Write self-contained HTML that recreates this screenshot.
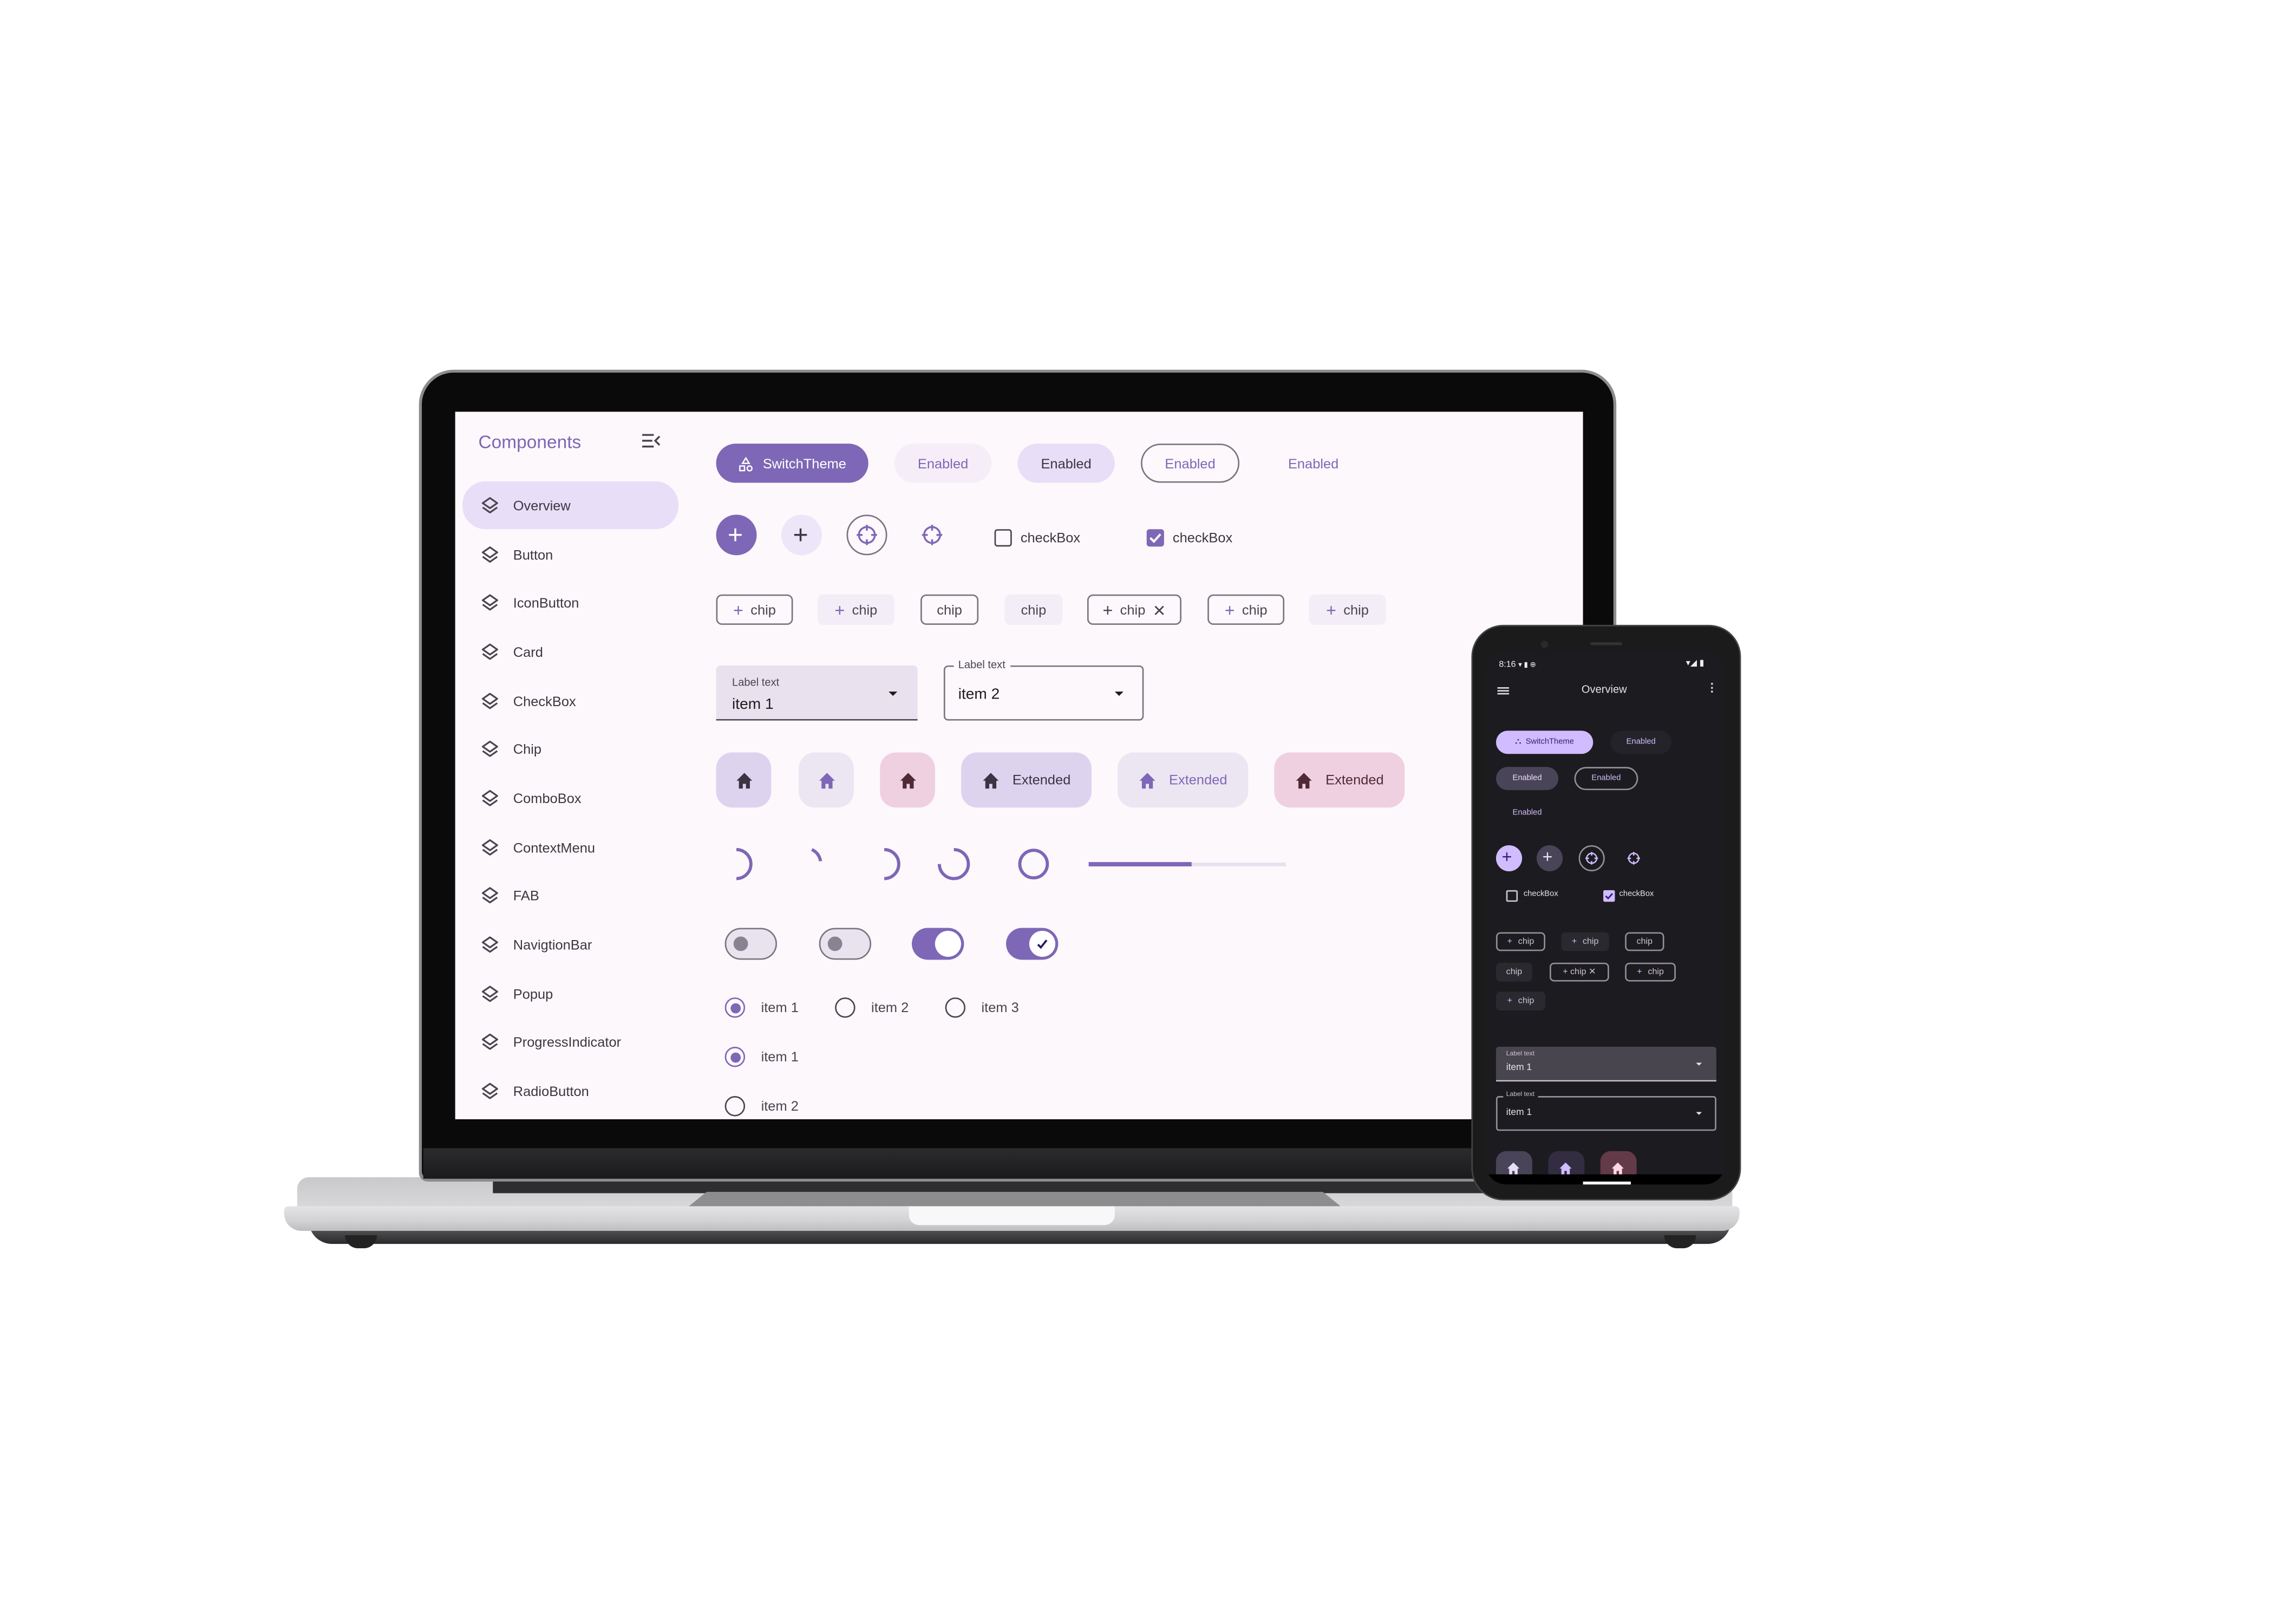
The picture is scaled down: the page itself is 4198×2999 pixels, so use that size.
<!DOCTYPE html>
<html><head><meta charset="utf-8">
<style>
*{margin:0;padding:0;box-sizing:border-box}
html,body{width:4198px;height:2998px;background:#fff;overflow:hidden}
#s{position:absolute;left:0;top:0;width:1568px;height:1120px;transform:scale(2.67730);transform-origin:0 0;font-family:"Liberation Sans",sans-serif}
.a{position:absolute}
.t{position:absolute;white-space:nowrap;line-height:1}
.nav{position:absolute;left:354px;font-size:9.5px;color:#3a3740}
.ni{position:absolute;left:331px}
.btn{position:absolute;height:27px;border-radius:14px;font-size:9.5px;display:flex;align-items:center;justify-content:center}
.chip{position:absolute;top:410px;height:21px;border-radius:4px;font-size:9.5px;color:#49454f;display:flex;align-items:center;justify-content:center;gap:5px}
.co{border:1px solid #79747e}
.cf{background:#f3edf7}
.fab{position:absolute;top:519px;height:38px;border-radius:11px;display:flex;align-items:center;justify-content:center;gap:8px;font-size:9.5px}
.pc{position:absolute;left:1032px;height:16px;border-radius:8px;font-size:5.5px;display:flex;align-items:center;justify-content:center;gap:3px}
.pch{position:absolute;height:13px;border-radius:3px;font-size:6px;color:#cac4d0;display:flex;align-items:center;justify-content:center;gap:4px}
.pco{border:.7px solid #938f99}
.pcf{background:#2b2930}
</style></head><body>
<div id="s">
<div class="a" style="left:213px;top:842px;width:981px;height:16px;border-radius:0 0 30px 30px;background:linear-gradient(#6a6a6c,#2a2a2c)"></div>
<div class="a" style="left:238px;top:852px;width:22px;height:9px;border-radius:0 0 10px 10px;background:#222"></div>
<div class="a" style="left:1148px;top:852px;width:22px;height:9px;border-radius:0 0 10px 10px;background:#222"></div>
<div class="a" style="left:205px;top:812px;width:990px;height:22px;border-radius:8px 8px 0 0;background:linear-gradient(#c9c9cc,#d9d9dc)"></div>
<div class="a" style="left:340px;top:813px;width:690px;height:10px;background:#2e2e30"></div>
<div class="a" style="left:474px;top:822px;width:452px;height:11px;background:#8d8d90;clip-path:polygon(3% 0,97% 0,100% 100%,0 100%)"></div>
<div class="a" style="left:196px;top:832px;width:1004px;height:17px;border-radius:3px 3px 12px 12px;background:linear-gradient(#e4e4e6,#d2d2d5 60%,#bdbdc0)"></div>
<div class="a" style="left:627px;top:832px;width:142px;height:13px;border-radius:0 0 7px 7px;background:#f8f8f8"></div>
<div class="a" style="left:289px;top:255px;width:826px;height:560px;border-radius:24px 24px 6px 6px;background:#8c8c8e"></div>
<div class="a" style="left:291px;top:257px;width:822px;height:556px;border-radius:22px 22px 5px 5px;background:#0a0a0b"></div>
<div class="a" style="left:292px;top:792px;width:820px;height:21px;background:linear-gradient(#2c2c2e,#1a1a1c)"></div>
<div class="a" style="left:314px;top:284px;width:778px;height:488px;background:#fdf8fc;overflow:hidden"></div>

<div class="t" style="left:330px;top:299px;font-size:12.5px;color:#7d67b4">Components</div>
<svg class="a" style="left:442px;top:298px" width="14" height="12" viewBox="0 0 14 12"><path d="M1 2H9M1 6H8M1 10H9M13 3L10 6L13 9" stroke="#49454f" stroke-width="1.3" fill="none"/></svg>
<div class="a" style="left:319px;top:332px;width:149px;height:33px;border-radius:16px;background:#e8def8"></div>
<div id="nav"></div>

<div class="btn" style="left:494px;top:306px;width:105px;background:#7e67b6;color:#fff;gap:6px;padding-top:2px"><svg width="11" height="11" viewBox="0 0 12 12"><path d="M6 1L8.5 5H3.5Z M1.5 7H5V10.5H1.5Z" fill="none" stroke="#fff" stroke-width="1"/><circle cx="8.8" cy="8.8" r="1.8" fill="none" stroke="#fff" stroke-width="1"/></svg>SwitchTheme</div>
<div class="btn" style="left:617px;top:306px;width:67px;background:#f5eef8;color:#7e67b6;padding-top:2px">Enabled</div>
<div class="btn" style="left:702px;top:306px;width:67px;background:#e8def8;color:#3a3740;padding-top:2px">Enabled</div>
<div class="btn" style="left:787px;top:306px;width:68px;border:1px solid #79747e;color:#7e67b6;padding-top:2px">Enabled</div>
<div class="btn" style="left:872px;top:306px;width:68px;color:#7e67b6;padding-top:2px">Enabled</div>

<div class="a" style="left:494px;top:355px;width:28px;height:28px;border-radius:50%;background:#7e67b6"></div>
<div class="t" style="left:502px;top:360px;font-size:18px;color:#fff">+</div>
<div class="a" style="left:539px;top:355px;width:28px;height:28px;border-radius:50%;background:#ede5f8"></div>
<div class="t" style="left:547px;top:360px;font-size:18px;color:#3a3740">+</div>
<div class="a" style="left:584px;top:355px;width:28px;height:28px;border-radius:50%;border:1px solid #79747e"></div>
<svg class="a" style="left:590px;top:361px" width="16" height="16" viewBox="0 0 16 16"><circle cx="8" cy="8" r="5.5" fill="none" stroke="#7e67b6" stroke-width="1.3"/><path d="M8 1V5M8 11V15M1 8H5M11 8H15" stroke="#7e67b6" stroke-width="1.3"/></svg>
<svg class="a" style="left:635px;top:361px" width="16" height="16" viewBox="0 0 16 16"><circle cx="8" cy="8" r="5.5" fill="none" stroke="#7e67b6" stroke-width="1.3"/><path d="M8 1V5M8 11V15M1 8H5M11 8H15" stroke="#7e67b6" stroke-width="1.3"/></svg>
<div class="a" style="left:686px;top:365px;width:12px;height:12px;border:1.4px solid #49454f;border-radius:2px"></div>
<div class="t" style="left:704px;top:367px;font-size:9.5px;color:#3a3740">checkBox</div>
<div class="a" style="left:791px;top:365px;width:12px;height:12px;background:#7e67b6;border-radius:2px"></div>
<svg class="a" style="left:791px;top:365px" width="12" height="12" viewBox="0 0 12 12"><path d="M2.5 6L5 8.5L9.5 3.5" stroke="#fff" stroke-width="1.5" fill="none"/></svg>
<div class="t" style="left:809px;top:367px;font-size:9.5px;color:#3a3740">checkBox</div>

<div class="chip co" style="left:494px;width:53px;padding-top:1px"><span style="color:#7e67b6;font-size:12px">+</span>chip</div>
<div class="chip cf" style="left:564px;width:53px;padding-top:1px"><span style="color:#7e67b6;font-size:12px">+</span>chip</div>
<div class="chip co" style="left:635px;width:40px;padding-top:1px">chip</div>
<div class="chip cf" style="left:693px;width:40px;padding-top:1px">chip</div>
<div class="chip co" style="left:750px;width:65px;padding-top:1px"><span style="font-size:12px">+</span>chip<span style="font-size:11px">✕</span></div>
<div class="chip co" style="left:833px;width:53px;padding-top:1px"><span style="color:#7e67b6;font-size:12px">+</span>chip</div>
<div class="chip cf" style="left:903px;width:53px;padding-top:1px"><span style="color:#7e67b6;font-size:12px">+</span>chip</div>

<div class="a" style="left:494px;top:459px;width:139px;height:38px;background:#e9e2ee;border-bottom:1.3px solid #49454f;border-radius:3px 3px 0 0"></div>
<div class="t" style="left:505px;top:467px;font-size:7.5px;color:#49454f">Label text</div>
<div class="t" style="left:505px;top:481px;font-size:10.5px;color:#1d1b20">item 1</div>
<div class="a" style="left:613px;top:477px;border-left:3.5px solid transparent;border-right:3.5px solid transparent;border-top:3.5px solid #1d1b20"></div>
<div class="a" style="left:651px;top:459px;width:138px;height:38px;border:1px solid #79747e;border-radius:3px"></div>
<div class="t" style="left:658px;top:455px;font-size:7.5px;color:#49454f;background:#fdf8fc;padding:0 3px">Label text</div>
<div class="t" style="left:661px;top:474px;font-size:10.5px;color:#1d1b20">item 2</div>
<div class="a" style="left:769px;top:477px;border-left:3.5px solid transparent;border-right:3.5px solid transparent;border-top:3.5px solid #1d1b20"></div>

<div class="fab" style="left:494px;width:38px;background:#ddd3ef"><svg width="13" height="13" viewBox="0 0 12 12"><path d="M6 1L1 6H2.5V11H5V8H7V11H9.5V6H11Z" fill="#3a3443"/></svg></div>
<div class="fab" style="left:551px;width:38px;background:#ece6f3"><svg width="13" height="13" viewBox="0 0 12 12"><path d="M6 1L1 6H2.5V11H5V8H7V11H9.5V6H11Z" fill="#7e67b6"/></svg></div>
<div class="fab" style="left:607px;width:38px;background:#efd0e0"><svg width="13" height="13" viewBox="0 0 12 12"><path d="M6 1L1 6H2.5V11H5V8H7V11H9.5V6H11Z" fill="#4f2a36"/></svg></div>
<div class="fab" style="left:663px;width:90px;background:#ddd3ef;color:#3a3443"><svg width="13" height="13" viewBox="0 0 12 12"><path d="M6 1L1 6H2.5V11H5V8H7V11H9.5V6H11Z" fill="#3a3443"/></svg>Extended</div>
<div class="fab" style="left:771px;width:90px;background:#ece6f3;color:#7e67b6"><svg width="13" height="13" viewBox="0 0 12 12"><path d="M6 1L1 6H2.5V11H5V8H7V11H9.5V6H11Z" fill="#7e67b6"/></svg>Extended</div>
<div class="fab" style="left:879px;width:90px;background:#efd0e0;color:#4f2a36"><svg width="13" height="13" viewBox="0 0 12 12"><path d="M6 1L1 6H2.5V11H5V8H7V11H9.5V6H11Z" fill="#4f2a36"/></svg>Extended</div>

<svg class="a" style="left:495px;top:580px" width="400" height="32" viewBox="0 0 400 32">
<g fill="none" stroke="#7e67b6" stroke-width="2.2">
<path d="M13 6A10 10 0 0 1 13 26"/>
<path d="M65 6A10 10 0 0 1 71 14"/>
<path d="M115 6A10 10 0 0 1 115 26"/>
<path d="M163 6A10 10 0 1 1 153 16"/>
<circle cx="218" cy="16" r="9.5"/>
</g>
<rect x="256" y="15" width="136" height="2.5" fill="#e8e0ee"/>
<rect x="256" y="14.6" width="71" height="3" fill="#7e67b6"/>
</svg>

<div class="a" style="left:500px;top:640px;width:36px;height:22px;border-radius:11px;border:1.5px solid #79747e;background:#e8e3ee"></div>
<div class="a" style="left:506px;top:646px;width:10px;height:10px;border-radius:50%;background:#888390"></div>
<div class="a" style="left:565px;top:640px;width:36px;height:22px;border-radius:11px;border:1.5px solid #79747e;background:#e8e3ee"></div>
<div class="a" style="left:571px;top:646px;width:10px;height:10px;border-radius:50%;background:#888390"></div>
<div class="a" style="left:629px;top:640px;width:36px;height:22px;border-radius:11px;background:#7e67b6"></div>
<div class="a" style="left:645px;top:642px;width:18px;height:18px;border-radius:50%;background:#fff"></div>
<div class="a" style="left:694px;top:640px;width:36px;height:22px;border-radius:11px;background:#7e67b6"></div>
<div class="a" style="left:710px;top:642px;width:18px;height:18px;border-radius:50%;background:#fff"></div>
<svg class="a" style="left:713px;top:645px" width="12" height="12" viewBox="0 0 12 12"><path d="M3 6.5L5 8.5L9 3.5" stroke="#2a1a5e" stroke-width="1.4" fill="none"/></svg>

<div id="radios"></div>

<!-- PHONE -->
<div class="a" style="left:1015px;top:431px;width:186px;height:397px;border-radius:22px;background:#1b1b1c;border:1.5px solid #444"></div>
<div class="a" style="left:1025px;top:448px;width:165px;height:369px;border-radius:14px;background:#1c1b1f;overflow:hidden">
  <div class="a" style="left:7px;top:346px;width:25px;height:30px;border-radius:7px;background:#4a4458"></div>
  <div class="a" style="left:43px;top:346px;width:25px;height:30px;border-radius:7px;background:#332d41"></div>
  <div class="a" style="left:79px;top:346px;width:25px;height:30px;border-radius:7px;background:#633b48"></div>
  <svg class="a" style="left:14px;top:353px" width="10" height="10" viewBox="0 0 12 12"><path d="M6 1L1 6H2.5V11H5V8H7V11H9.5V6H11Z" fill="#e8def8"/></svg>
  <svg class="a" style="left:50px;top:353px" width="10" height="10" viewBox="0 0 12 12"><path d="M6 1L1 6H2.5V11H5V8H7V11H9.5V6H11Z" fill="#d0bcff"/></svg>
  <svg class="a" style="left:86px;top:353px" width="10" height="10" viewBox="0 0 12 12"><path d="M6 1L1 6H2.5V11H5V8H7V11H9.5V6H11Z" fill="#ffd8e4"/></svg>
  <div class="a" style="left:0;top:362px;width:165px;height:10px;background:#000"></div>
</div>
<div class="a" style="left:1092px;top:815px;width:33px;height:1.5px;background:#fff"></div>
<div class="a" style="left:1097px;top:443px;width:22px;height:2px;border-radius:1px;background:#333"></div>
<div class="a" style="left:1063px;top:442px;width:5px;height:5px;border-radius:50%;background:#2a2a2a"></div>
<div class="t" style="left:1034px;top:456px;font-size:6px;color:#eee">8:16 <span style="font-size:5px">▾ ▮ ⊕</span></div>
<div class="t" style="left:1163px;top:455px;font-size:6px;color:#eee">▾◢ ▮</div>
<div class="a" style="left:1033px;top:474px;width:8px;height:.8px;background:#ddd;box-shadow:0 2px 0 #ddd,0 4px 0 #ddd"></div>
<div class="t" style="left:1091px;top:472px;font-size:7.5px;color:#e6e1e5">Overview</div>
<div class="t" style="left:1177px;top:471px;font-size:8px;color:#ddd;font-weight:bold">⋮</div>
<div class="pc" style="top:504px;width:67px;background:#d0bcff;color:#381e72"><span style="font-size:6px">⛬</span>SwitchTheme</div>
<div class="pc" style="left:1111px;top:504px;width:42px;background:#25232a;color:#d0bcff">Enabled</div>
<div class="pc" style="top:529px;width:43px;background:#4a4458;color:#e8def8">Enabled</div>
<div class="pc" style="left:1086px;top:529px;width:44px;border:.7px solid #938f99;color:#d0bcff">Enabled</div>
<div class="pc" style="top:553px;width:43px;color:#d0bcff">Enabled</div>
<div class="a" style="left:1032px;top:583px;width:18px;height:18px;border-radius:50%;background:#d0bcff"></div>
<div class="t" style="left:1036px;top:585px;font-size:12px;color:#381e72">+</div>
<div class="a" style="left:1060px;top:583px;width:18px;height:18px;border-radius:50%;background:#4a4458"></div>
<div class="t" style="left:1064px;top:585px;font-size:12px;color:#e8def8">+</div>
<div class="a" style="left:1089px;top:583px;width:18px;height:18px;border-radius:50%;border:.7px solid #938f99"></div>
<svg class="a" style="left:1093px;top:587px" width="10" height="10" viewBox="0 0 16 16"><circle cx="8" cy="8" r="5.5" fill="none" stroke="#d0bcff" stroke-width="1.5"/><path d="M8 1V5M8 11V15M1 8H5M11 8H15" stroke="#d0bcff" stroke-width="1.5"/></svg>
<svg class="a" style="left:1122px;top:587px" width="10" height="10" viewBox="0 0 16 16"><circle cx="8" cy="8" r="5.5" fill="none" stroke="#d0bcff" stroke-width="1.5"/><path d="M8 1V5M8 11V15M1 8H5M11 8H15" stroke="#d0bcff" stroke-width="1.5"/></svg>
<div class="a" style="left:1039px;top:614px;width:8px;height:8px;border:.8px solid #cac4d0;border-radius:1px"></div>
<div class="t" style="left:1051px;top:615px;font-size:5.5px;color:#e6e1e5">checkBox</div>
<div class="a" style="left:1106px;top:614px;width:8px;height:8px;background:#d0bcff;border-radius:1px"></div>
<svg class="a" style="left:1106px;top:614px" width="8" height="8" viewBox="0 0 12 12"><path d="M2.5 6L5 8.5L9.5 3.5" stroke="#381e72" stroke-width="1.6" fill="none"/></svg>
<div class="t" style="left:1117px;top:615px;font-size:5.5px;color:#e6e1e5">checkBox</div>
<div class="pch pco" style="left:1032px;top:643px;width:34px"><span style="color:#d0bcff">+</span>chip</div>
<div class="pch pcf" style="left:1077px;top:643px;width:33px"><span style="color:#d0bcff">+</span>chip</div>
<div class="pch pco" style="left:1121px;top:643px;width:27px">chip</div>
<div class="pch pcf" style="left:1032px;top:664px;width:25px">chip</div>
<div class="pch pco" style="left:1069px;top:664px;width:41px">+ chip ✕</div>
<div class="pch pco" style="left:1121px;top:664px;width:35px"><span style="color:#d0bcff">+</span>chip</div>
<div class="pch pcf" style="left:1032px;top:684px;width:34px"><span style="color:#d0bcff">+</span>chip</div>
<div class="a" style="left:1032px;top:722px;width:152px;height:24px;background:#49454f;border-bottom:.7px solid #cac4d0;border-radius:2px 2px 0 0"></div>
<div class="t" style="left:1039px;top:725px;font-size:4.5px;color:#cac4d0">Label text</div>
<div class="t" style="left:1039px;top:734px;font-size:6.5px;color:#e6e1e5">item 1</div>
<div class="a" style="left:1170px;top:733px;border-left:2.5px solid transparent;border-right:2.5px solid transparent;border-top:2.5px solid #e6e1e5"></div>
<div class="a" style="left:1032px;top:756px;width:152px;height:24px;border:.7px solid #938f99;border-radius:2px"></div>
<div class="t" style="left:1037px;top:753px;font-size:4.5px;color:#cac4d0;background:#1c1b1f;padding:0 2px">Label text</div>
<div class="t" style="left:1039px;top:765px;font-size:6.5px;color:#e6e1e5">item 1</div>
<div class="a" style="left:1170px;top:767px;border-left:2.5px solid transparent;border-right:2.5px solid transparent;border-top:2.5px solid #e6e1e5"></div>
</div>
<script>
(function(){
var names=["Overview","Button","IconButton","Card","CheckBox","Chip","ComboBox","ContextMenu","FAB","NavigtionBar","Popup","ProgressIndicator","RadioButton"];
var h="";
names.forEach(function(n,i){var y=349+i*33.65;
h+='<svg class="ni" style="top:'+(y-7)+'px" width="14" height="14" viewBox="0 0 14 14"><path d="M7 1.5L12 5L7 8.5L2 5Z M2 8L7 11.5L12 8" fill="none" stroke="#49454f" stroke-width="1.2" stroke-linejoin="round"/></svg>';
h+='<div class="t nav" style="top:'+(y-4)+'px">'+n+'</div>';});
document.getElementById("nav").innerHTML=h;
var r=[[507,695,1,"item 1"],[583,695,0,"item 2"],[659,695,0,"item 3"],[507,729,1,"item 1"],[507,763,0,"item 2"]];
var g="";
r.forEach(function(a){var c=a[2]?"#7e67b6":"#49454f";
g+='<div class="a" style="left:'+(a[0]-7)+'px;top:'+(a[1]-7)+'px;width:14px;height:14px;border-radius:50%;border:1.5px solid '+c+'"></div>';
if(a[2])g+='<div class="a" style="left:'+(a[0]-3.5)+'px;top:'+(a[1]-3.5)+'px;width:7px;height:7px;border-radius:50%;background:'+c+'"></div>';
g+='<div class="t" style="left:'+(a[0]+18)+'px;top:'+(a[1]-4)+'px;font-size:9.5px;color:#49454f">'+a[3]+'</div>';});
document.getElementById("radios").innerHTML=g;
})();
</script>
<style>#radios{position:absolute;left:0;top:0;width:1092px;height:772px;overflow:hidden}</style>
</body></html>
